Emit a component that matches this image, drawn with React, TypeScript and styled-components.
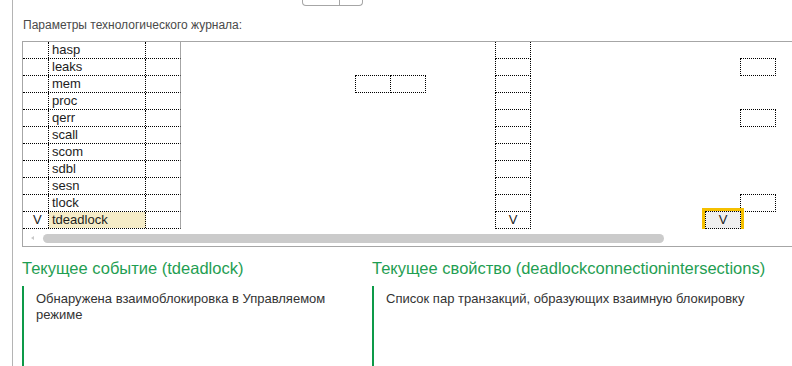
import styled, { createGlobalStyle } from "styled-components";

type CellKind = "none" | "col" | "box" | "selected";

interface IRow {
  name: string;
  mark?: boolean;
  cells: Record<number, { kind: CellKind; text?: string }>;
}

const COLS = 18;

const rows: IRow[] = [
  { name: "hasp", cells: {} },
  { name: "leaks", cells: { 16: { kind: "box" } } },
  { name: "mem", cells: { 5: { kind: "box" }, 6: { kind: "box" } } },
  { name: "proc", cells: {} },
  { name: "qerr", cells: { 16: { kind: "box" } } },
  { name: "scall", cells: {} },
  { name: "scom", cells: {} },
  { name: "sdbl", cells: {} },
  { name: "sesn", cells: {} },
  { name: "tlock", cells: { 16: { kind: "box" } } },
  {
    name: "tdeadlock",
    mark: true,
    cells: { 9: { kind: "col", text: "V" }, 15: { kind: "selected", text: "V" } },
  },
];

const GlobalStyle = createGlobalStyle`
  html, body {
    margin: 0;
    padding: 0;
    background: #ffffff;
    overflow: hidden;
  }
  body {
    font-family: "Liberation Sans", Arial, sans-serif;
  }
`;

const Page = styled.div`
  display: flex;
  width: 792px;
  height: 366px;
  overflow: hidden;
`;

const Rail = styled.div`
  width: 12px;
  flex-shrink: 0;
  border-right: 1px solid #b4b4b4;
`;

const Main = styled.div`
  flex: 1;
  min-width: 0;
  padding-left: 9px;
  display: flex;
  flex-direction: column;
`;

const TopBar = styled.div`
  height: 6px;
  padding-left: 280px;
  display: flex;
`;

const SplitButton = styled.div`
  width: 61px;
  height: 6px;
  box-sizing: border-box;
  border: 1px solid #a6a6a6;
  border-top: none;
  border-radius: 0 0 4px 4px;
  display: flex;
`;

const ButtonPart = styled.div<{ $divider?: boolean }>`
  width: ${(p) => (p.$divider ? "37px" : "auto")};
  flex: ${(p) => (p.$divider ? "none" : "1")};
  box-sizing: border-box;
  border-right: ${(p) => (p.$divider ? "1px solid #a6a6a6" : "none")};
`;

const Label = styled.div`
  margin-top: 12px;
  padding-left: 1px;
  font-size: 12px;
  line-height: 15px;
  color: #4a4a4a;
`;

const Grid = styled.div`
  margin-top: 8px;
  width: 800px;
  flex-shrink: 0;
  border: 1px solid #a6a6a6;
`;

const Rows = styled.div`
  height: 187px;
  overflow: hidden;
  position: relative;
`;

const Row = styled.div`
  display: flex;
  height: 17px;
  font-size: 13px;
  line-height: 16px;
  color: #1c1c1c;
`;

const Frozen = styled.div`
  display: flex;
  width: 158px;
  height: 17px;
  flex-shrink: 0;
  box-sizing: border-box;
  border-right: 1px solid #a6a6a6;
  border-bottom: 1px dotted #000;
`;

const MarkCell = styled.div`
  width: 26px;
  box-sizing: border-box;
  padding-left: 10px;
  border-right: 1px dotted #000;
`;

const NameCell = styled.div<{ $current?: boolean }>`
  width: 97px;
  box-sizing: border-box;
  padding-left: 3px;
  border-right: 1px dotted #000;
  background: ${(p) => (p.$current ? "#f5ecc8" : "transparent")};
`;

const SpareCell = styled.div`
  flex: 1;
`;

const DataCell = styled.div<{ $kind: CellKind; $noLeft?: boolean }>`
  flex-shrink: 0;
  box-sizing: border-box;
  text-align: center;
  width: ${(p) => (p.$kind === "none" || p.$noLeft ? "35px" : "36px")};
  margin-left: ${(p) => (p.$kind === "none" || p.$noLeft ? "0" : "-1px")};
  height: ${(p) => (p.$kind === "box" || p.$kind === "selected" ? "18px" : "17px")};
  margin-top: ${(p) => (p.$kind === "box" || p.$kind === "selected" ? "-1px" : "0")};
  border: ${(p) => (p.$kind === "none" ? "none" : "1px dotted #000")};
  border-top: ${(p) =>
    p.$kind === "box" || p.$kind === "selected" ? "1px dotted #000" : "none"};
  border-left: ${(p) => (p.$kind === "none" || p.$noLeft ? "none" : "1px dotted #000")};
  background: ${(p) => (p.$kind === "selected" ? "#efefef" : "transparent")};
  box-shadow: ${(p) => (p.$kind === "selected" ? "0 0 0 3px #f5c000" : "none")};
  position: relative;
  z-index: ${(p) => (p.$kind === "selected" ? 1 : 0)};
`;

const ScrollRow = styled.div`
  height: 17px;
  display: flex;
  align-items: flex-start;
  padding-top: 5px;
  box-sizing: border-box;
`;

const ScrollArrow = styled.div`
  width: 0;
  height: 0;
  margin-left: 8px;
  margin-top: 2px;
  border-right: 3px solid #c8c8c8;
  border-top: 2px solid transparent;
  border-bottom: 2px solid transparent;
`;

const ScrollThumb = styled.div`
  margin-left: 9px;
  width: 621px;
  height: 9px;
  border-radius: 5px;
  background: #cbcbcb;
`;

const Panels = styled.div`
  margin-top: 12px;
  display: grid;
  grid-template-columns: 350px 1fr;
  flex: 1;
`;

const Panel = styled.div`
  display: flex;
  flex-direction: column;
`;

const PanelTitle = styled.div`
  font-size: 16.5px;
  line-height: 19px;
  color: #1f9e52;
  white-space: nowrap;
`;

const PanelBody = styled.div`
  margin-top: 8px;
  flex: 1;
  border-left: 2px solid #0d9a48;
  padding: 5px 16px 0 12px;
  font-size: 13px;
  line-height: 16px;
  color: #333333;
`;

const App = () => {
  return (
    <>
      <GlobalStyle />
      <Page>
        <Rail />
        <Main>
          <TopBar>
            <SplitButton>
              <ButtonPart $divider />
              <ButtonPart />
            </SplitButton>
          </TopBar>
          <Label>Параметры технологического журнала:</Label>
          <Grid>
            <Rows>
              {rows.map((row) => (
                <Row key={row.name}>
                  <Frozen>
                    <MarkCell>{row.mark ? "V" : ""}</MarkCell>
                    <NameCell $current={row.mark}>{row.name}</NameCell>
                    <SpareCell />
                  </Frozen>
                  {Array.from({ length: COLS }).map((_, i) => {
                    const cell = row.cells[i];
                    const kind: CellKind = cell ? cell.kind : i === 9 ? "col" : "none";
                    const prev = row.cells[i - 1];
                    const noLeft = kind === "box" && prev?.kind === "box";
                    return (
                      <DataCell key={i} $kind={kind} $noLeft={noLeft}>
                        {cell?.text}
                      </DataCell>
                    );
                  })}
                </Row>
              ))}
            </Rows>
            <ScrollRow>
              <ScrollArrow />
              <ScrollThumb />
            </ScrollRow>
          </Grid>
          <Panels>
            <Panel>
              <PanelTitle>Текущее событие (tdeadlock)</PanelTitle>
              <PanelBody>Обнаружена взаимоблокировка в Управляемом режиме</PanelBody>
            </Panel>
            <Panel>
              <PanelTitle>Текущее свойство (deadlockconnectionintersections)</PanelTitle>
              <PanelBody>Список пар транзакций, образующих взаимную блокировку</PanelBody>
            </Panel>
          </Panels>
        </Main>
      </Page>
    </>
  );
};

export default App;
